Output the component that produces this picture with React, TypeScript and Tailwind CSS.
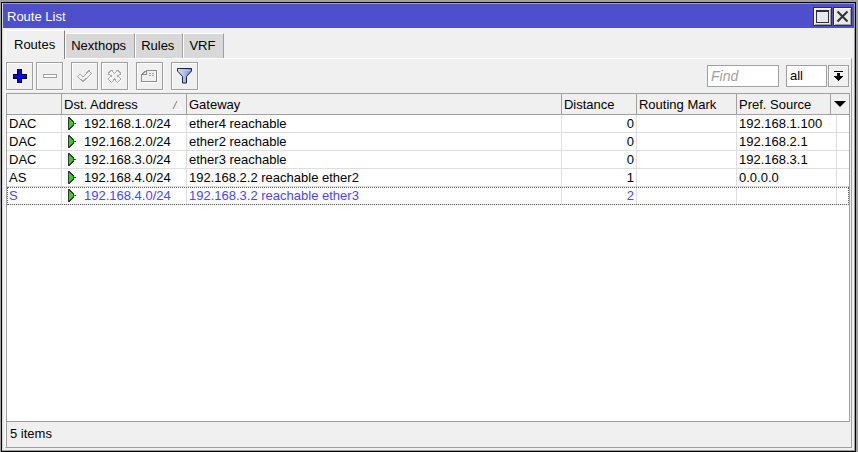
import { ReactNode } from "react";

type Route = {
  flags: string;
  dst: string;
  gateway: string;
  distance: number;
  mark: string;
  source: string;
};

const routes: Route[] = [
  { flags: "DAC", dst: "192.168.1.0/24", gateway: "ether4 reachable", distance: 0, mark: "", source: "192.168.1.100" },
  { flags: "DAC", dst: "192.168.2.0/24", gateway: "ether2 reachable", distance: 0, mark: "", source: "192.168.2.1" },
  { flags: "DAC", dst: "192.168.3.0/24", gateway: "ether3 reachable", distance: 0, mark: "", source: "192.168.3.1" },
  { flags: "AS", dst: "192.168.4.0/24", gateway: "192.168.2.2 reachable ether2", distance: 1, mark: "", source: "0.0.0.0" },
  { flags: "S", dst: "192.168.4.0/24", gateway: "192.168.3.2 reachable ether3", distance: 2, mark: "", source: "" },
];

const inactiveTabs = ["Nexthops", "Rules", "VRF"];

function ToolButton({ label, disabled, children }: { label: string; disabled?: boolean; children: ReactNode }) {
  return (
    <button
      type="button"
      aria-label={label}
      disabled={disabled}
      className="flex h-7 w-[27px] items-center justify-center border border-[#a0a0a0] bg-[#f0f0f0] shadow-[inset_1px_1px_0_#fff,1px_1px_0_#fafafa]"
    >
      {children}
    </button>
  );
}

function WindowButton({ label, children }: { label: string; children: ReactNode }) {
  return (
    <button
      type="button"
      aria-label={label}
      className="flex size-[19px] items-center justify-center border border-[#303030] bg-[#e8e6ee] shadow-[inset_1px_1px_0_#fff,inset_-1px_-1px_0_#a0a0a0]"
    >
      {children}
    </button>
  );
}

function AddIcon() {
  return (
    <svg width="15" height="14" viewBox="0 0 15 14" shapeRendering="crispEdges">
      <path d="M5 0h5v5h5v5h-5v4H5v-4H1V5h4z" fill="#000" />
      <path d="M6 1h3v5h5v3H9v4H6V9H2V6h4z" fill="#0000ff" />
    </svg>
  );
}

function RemoveIcon() {
  return (
    <svg width="15" height="14" viewBox="0 0 15 14" shapeRendering="crispEdges">
      <rect x="1.5" y="5.5" width="13" height="3" fill="#fafafa" stroke="#a0a0a0" />
    </svg>
  );
}

function EnableIcon() {
  const tick = "M0.500 7.500l2.500-2.500 3 3 6-6.500 2.500 3L6 12.500z";
  return (
    <svg width="15" height="14" viewBox="0 0 15 14" fill="none">
      <path d={tick} stroke="#fff" transform="translate(1 1)" />
      <path d={tick} stroke="#a8a8a8" shapeRendering="crispEdges" />
    </svg>
  );
}

function DisableIcon() {
  const cross = "M4 1.500h1l2.500 3 2.500-3h1l2.500 2.500v1L10.500 7l3 2.500v1L11 13h-1L7.500 10 5 13H4L1.500 10.500v-1L4.500 7l-3-2V4z";
  return (
    <svg width="15" height="14" viewBox="0 0 15 14" fill="none">
      <path d={cross} stroke="#fff" transform="translate(1 1)" />
      <path d={cross} stroke="#a8a8a8" shapeRendering="crispEdges" />
    </svg>
  );
}

function CommentIcon() {
  return (
    <svg width="17" height="14" viewBox="0 0 17 14" fill="none" shapeRendering="crispEdges">
      <path d="M1 13.500h15.500V2" stroke="#fff" />
      <path d="M5.500 1.500h10v11H0.500V5.500z" stroke="#8c8c8c" />
      <path d="M1 5.500h4.500v-4" stroke="#8c8c8c" />
      <path d="M8 4.500h2M11 4.500h2M8 6.500h2M11 6.500h2" stroke="#a0a0a0" />
    </svg>
  );
}

function FilterIcon() {
  return (
    <svg width="15" height="16" viewBox="0 0 15 16">
      <defs>
        <linearGradient id="funnel" x1="0" x2="1" y1="0" y2="0">
          <stop offset="0" stopColor="#e4efff" />
          <stop offset="1" stopColor="#6f8bd0" />
        </linearGradient>
      </defs>
      <path d="M0.500 0.500h14v2.500L9.500 8.500v6.500h-4V8.500L0.500 3z" fill="url(#funnel)" stroke="#202038" />
      <path d="M2 2.500h11" stroke="#b4c8f4" />
    </svg>
  );
}

function RouteIcon() {
  return (
    <svg className="shrink-0" width="9" height="13" viewBox="0 0 9 13" shapeRendering="crispEdges" aria-hidden="true">
      <path d="M0 0h2v1h1v1h1v1h1v1h1v2h2v1H6v2H5v1H4v1H3v1H2v1H0z" fill="#383838" />
      <path d="M1 2h1v1h1v1h1v1h1v3H4v1H3v1H2v1H1z" fill="#22dd00" />
    </svg>
  );
}

function SortIcon() {
  return (
    <svg width="11" height="10" viewBox="0 0 11 10" fill="none" aria-hidden="true">
      <path d="M5.500 1l4.500 8.500H1" stroke="#fff" />
      <path d="M1 9L5 1" stroke="#808080" />
    </svg>
  );
}

export default function App() {
  const th = "h-[21px] border-r border-b border-[#a0a0a0] bg-[#f0f0f0] px-[2px] pt-px text-left font-normal";
  const td = "h-[18px] border-r border-b border-[#dedede] px-[2px]";

  return (
    <div className="h-screen bg-[#a0a0a0] pt-[2px] pr-[2px] pl-px font-['Liberation_Sans',Arial,sans-serif] text-[13px] leading-[16px] text-black">
      <main className="flex h-full flex-col border border-black bg-[#f0f0f0]">
        <div className="flex min-h-0 flex-1 flex-col border border-[#a0a0a0] border-l-[#d8d8d8]">
          <header className="flex h-6 shrink-0 items-center justify-between bg-[#4d4fcc] pr-[2px] pl-1 text-white">
            <h1 className="pt-[2px]">Route List</h1>
            <div className="flex gap-px">
              <WindowButton label="Maximize">
                <svg width="13" height="13" viewBox="0 0 13 13" fill="none" shapeRendering="crispEdges">
                  <path d="M0.500 0.500h12v12H0.500zM0 1.500h13" stroke="#303030" />
                </svg>
              </WindowButton>
              <WindowButton label="Close">
                <svg width="13" height="13" viewBox="0 0 13 13">
                  <path d="M1.500 1.500l10 10M11.500 1.500l-10 10" stroke="#303030" strokeWidth="2" />
                </svg>
              </WindowButton>
            </div>
          </header>

          <div className="mx-[2px] mb-[2px] flex min-h-0 flex-1 flex-col pt-[2px]">
            <div role="tablist" className="flex h-7 shrink-0 items-end">
              <button
                type="button"
                role="tab"
                aria-selected="true"
                className="z-10 -mb-px h-[29px] border-t border-r border-l border-t-white border-r-[#808080] border-l-white bg-[#f0f0f0] pr-[9px] pl-2"
              >
                Routes
              </button>
              {inactiveTabs.map((tab) => (
                <button
                  key={tab}
                  type="button"
                  role="tab"
                  aria-selected="false"
                  className="h-[25px] border-t border-r border-l border-t-white border-r-[#a0a0a0] border-l-white bg-[#d8d8d8] pr-2 pl-[5px]"
                >
                  {tab}
                </button>
              ))}
            </div>

            <section className="flex min-h-0 flex-1 flex-col border border-t-white border-r-[#a0a0a0] border-b-[#a0a0a0] border-l-white pr-px">
              <div className="flex h-[34px] shrink-0 items-center justify-between pr-px">
                <div className="flex gap-2">
                  <div className="flex gap-[3px]">
                    <ToolButton label="Add"><AddIcon /></ToolButton>
                    <ToolButton label="Remove" disabled><RemoveIcon /></ToolButton>
                  </div>
                  <div className="flex gap-[3px]">
                    <ToolButton label="Enable" disabled><EnableIcon /></ToolButton>
                    <ToolButton label="Disable" disabled><DisableIcon /></ToolButton>
                  </div>
                  <ToolButton label="Comment" disabled><CommentIcon /></ToolButton>
                  <ToolButton label="Filter"><FilterIcon /></ToolButton>
                </div>
                <div className="flex">
                  <input
                    type="text"
                    aria-label="Find"
                    placeholder="Find"
                    className="mr-[7px] h-[22px] w-[72px] border border-[#a0a0a0] bg-white px-[3px] text-[14px] italic outline-none placeholder:text-[#a0a0a0]"
                  />
                  <select aria-label="Scope" className="mr-px h-[22px] w-[41px] appearance-none border border-[#a0a0a0] bg-white px-[3px]">
                    <option>all</option>
                  </select>
                  <button
                    type="button"
                    aria-label="Show scopes"
                    className="flex h-[22px] w-[21px] items-center justify-center border border-[#a0a0a0] bg-[#f0f0f0] shadow-[inset_1px_1px_0_#fff]"
                  >
                    <svg width="9" height="10" viewBox="0 0 9 10" shapeRendering="crispEdges">
                      <path d="M0 0h9v1H0zM3 2h3v3h3v1H8v1H7v1H6v1H5v1H4V9H3V8H2V7H1V6H0V5h3z" />
                    </svg>
                  </button>
                </div>
              </div>

              <div className="min-h-0 flex-1 border border-[#a0a0a0] bg-white">
                <table className="w-full table-fixed border-separate border-spacing-0 whitespace-nowrap">
                  <colgroup>
                    <col className="w-[55px]" />
                    <col className="w-[125px]" />
                    <col />
                    <col className="w-[75px]" />
                    <col className="w-[100px]" />
                    <col className="w-[100px]" />
                    <col className="w-3" />
                  </colgroup>
                  <thead>
                    <tr>
                      <th className={th} aria-label="Flags" />
                      <th className={th}>
                        <div className="flex items-center justify-between pr-px">
                          Dst. Address
                          <SortIcon />
                        </div>
                      </th>
                      <th className={th}>Gateway</th>
                      <th className={th}>Distance</th>
                      <th className={th}>Routing Mark</th>
                      <th colSpan={2} className="h-[21px] border-b border-[#a0a0a0] bg-[#f0f0f0] p-0 pl-[2px] text-left font-normal">
                        <div className="flex h-5 items-center justify-between">
                          <span className="pt-px">Pref. Source</span>
                          <button type="button" aria-label="Choose columns" className="flex h-full w-[19px] items-center justify-center border-l border-[#a0a0a0]">
                            <svg width="12" height="6" viewBox="0 0 12 6">
                              <path d="M0 0h12L6 6z" />
                            </svg>
                          </button>
                        </div>
                      </th>
                    </tr>
                  </thead>
                  <tbody>
                    {routes.map((route, i) => (
                      <tr
                        key={i}
                        className={route.distance === 2 ? "text-[#4848ee] outline-1 -outline-offset-1 outline-dotted outline-[#606060]" : ""}
                      >
                        <td className={td}>{route.flags}</td>
                        <td className={td}>
                          <div className="flex items-center gap-[7px] pl-1">
                            <RouteIcon />
                            {route.dst}
                          </div>
                        </td>
                        <td className={td}>{route.gateway}</td>
                        <td className={td + " text-right"}>{route.distance}</td>
                        <td className={td}>{route.mark}</td>
                        <td className={td}>{route.source}</td>
                        <td className="border-b border-[#dedede] p-0" />
                      </tr>
                    ))}
                  </tbody>
                </table>
              </div>
              <footer className="h-[25px] shrink-0 border-l border-[#a0a0a0] px-[3px] pt-1">5 items</footer>
            </section>
          </div>
        </div>
      </main>
    </div>
  );
}
